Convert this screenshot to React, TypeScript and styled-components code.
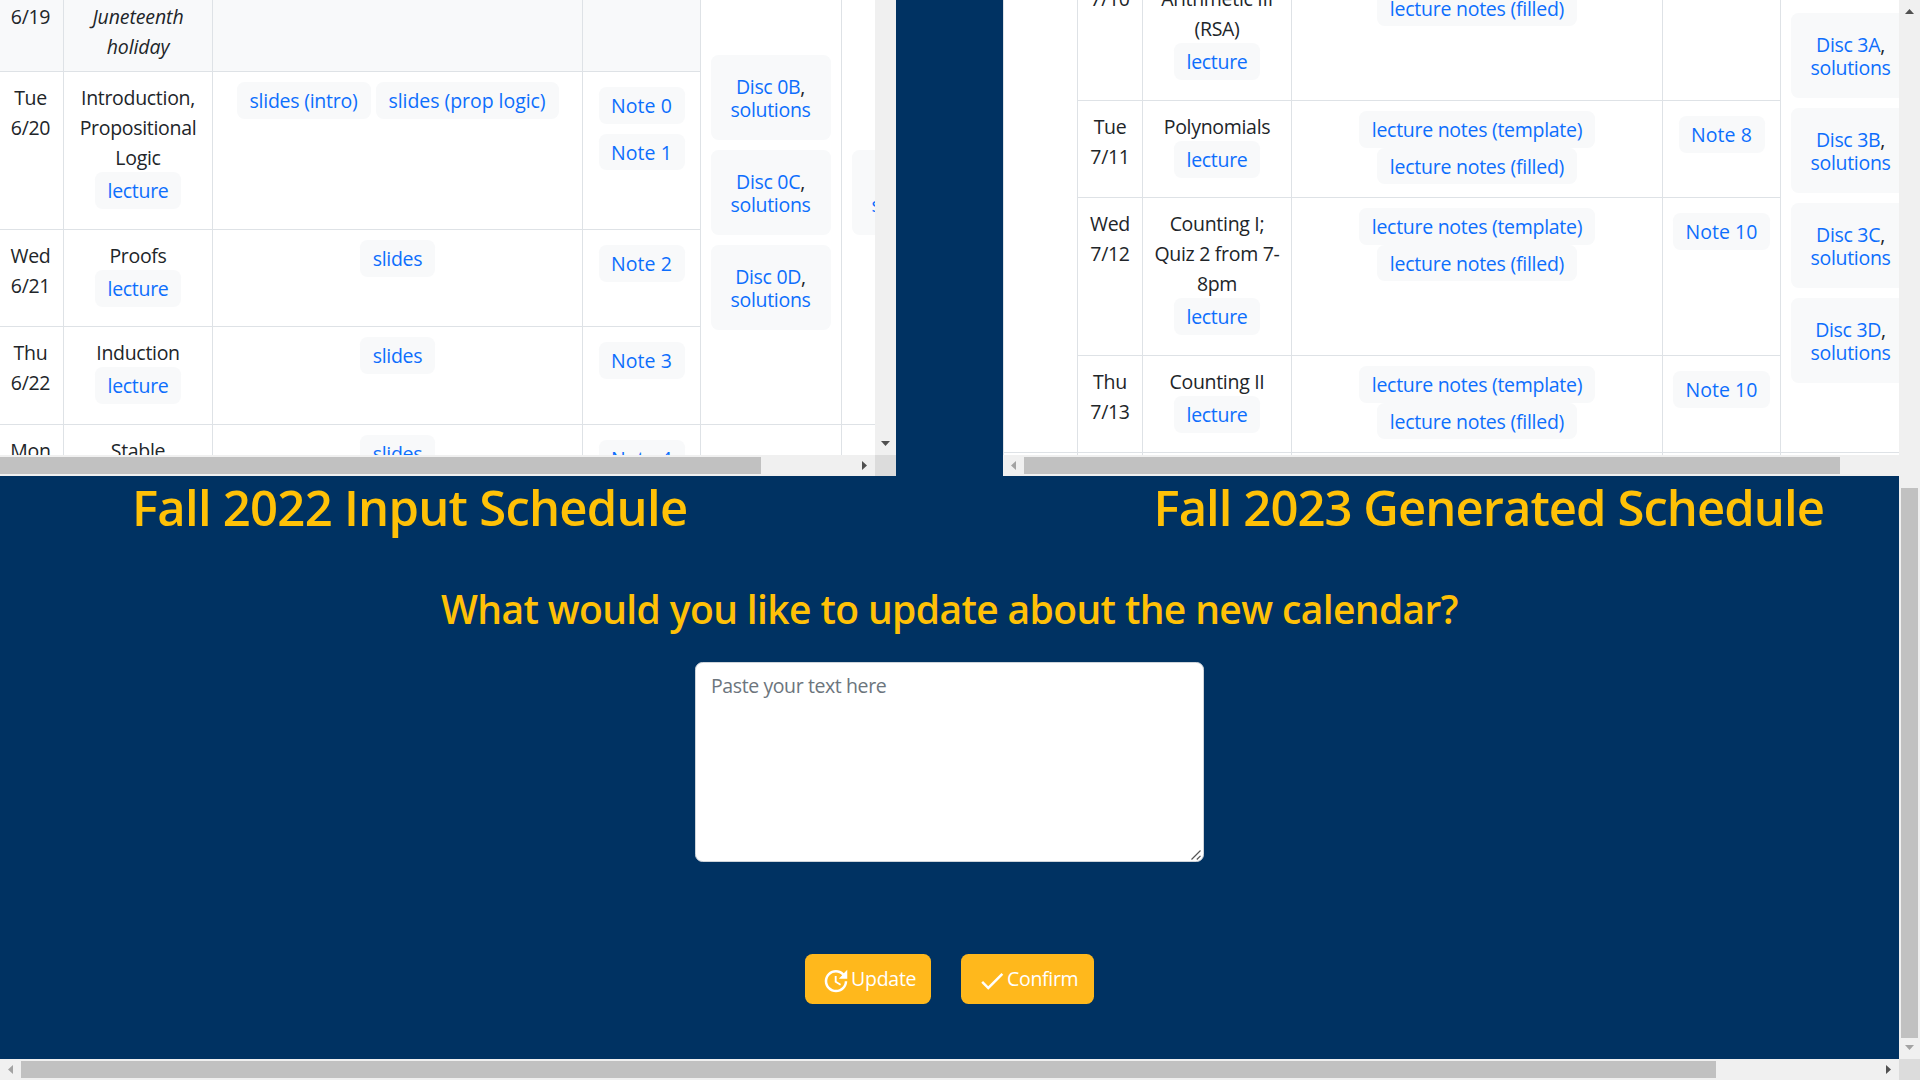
import React from 'react';
import styled, { createGlobalStyle, css } from 'styled-components';

const ink = '#212529';
const link = '#0d6efd';
const line = '#dee2e6';
const chip = '#f8f9fa';
const navy = '#003262';
const gold = '#ffc107';

const GlobalStyle = createGlobalStyle`
  * { box-sizing: border-box; }
  body {
    margin: 0;
    overflow: hidden;
    background: ${navy};
    color: ${ink};
    font-family: "Open Sans", "Noto Sans", sans-serif;
    font-size: 19.5px;
    line-height: 30px;
    letter-spacing: -0.3px;
  }
`;

/* ---------- page frame ---------- */

const Frame = styled.div`
  display: grid;
  grid-template-columns: 1899px 21px;
  grid-template-rows: 1059px 21px;
  width: 1920px;
  height: 1080px;
`;

const Page = styled.main`
  display: flex;
  flex-direction: column;
  overflow: hidden;
  background: ${navy};
`;

const Panes = styled.div`
  display: flex;
  justify-content: space-between;
  height: 476px;
`;

const Pane = styled.section<{ $bar?: boolean }>`
  display: grid;
  grid-template-columns: ${p => (p.$bar ? '875px 21px' : '896px')};
  grid-template-rows: 455px 21px;
  width: 896px;
`;

const Viewport = styled.div`
  overflow: hidden;
  background: #fff;
`;

/* ---------- scrollbars ---------- */

const Bar = styled.div<{ $vertical?: boolean }>`
  display: flex;
  flex-direction: ${p => (p.$vertical ? 'column' : 'row')};
  overflow: hidden;
  background: #f0f0f0;
`;

const Thumb = styled.div<{ $before: number; $length: number; $vertical?: boolean }>`
  flex: none;
  background: #c1c1c1;
  ${p =>
    p.$vertical
      ? css`
          width: 17px;
          height: ${p.$length}px;
          margin: ${p.$before}px 2px 0;
        `
      : css`
          width: ${p.$length}px;
          height: 17px;
          margin: 2px 0 0 ${p.$before}px;
        `}
`;

const Corner = styled.div`
  background: #dcdcdc;
`;

const ArrowBox = styled.div<{ $end?: boolean; $vertical?: boolean; $dim?: boolean }>`
  display: flex;
  flex: none;
  width: 21px;
  height: 21px;
  ${p => p.$end && (p.$vertical ? 'margin-top: auto;' : 'margin-left: auto;')}
  color: ${p => (p.$dim ? '#a3a3a3' : '#505050')};
`;

const arrowPoints = {
  up: '6,14 15,14 10.5,9',
  down: '6,7 15,7 10.5,12',
  left: '13,6 13,15 8,10.5',
  right: '8,6 8,15 13,10.5',
};

function Arrow({ dir, dim, end }: { dir: keyof typeof arrowPoints; dim?: boolean; end?: boolean }) {
  return (
    <ArrowBox $end={end} $dim={dim} $vertical={dir === 'up' || dir === 'down'}>
      <svg width="21" height="21" viewBox="0 0 21 21">
        <polygon points={arrowPoints[dir]} fill="currentColor" />
      </svg>
    </ArrowBox>
  );
}

/* ---------- schedule table ---------- */

const Schedule = styled.div<{ $columns: string; $rows: string; $scroll: number }>`
  display: grid;
  grid-template-columns: ${p => p.$columns};
  grid-template-rows: ${p => p.$rows};
  margin-top: -${p => p.$scroll}px;
`;

const cell = css`
  border-right: 1px solid ${line};
  border-bottom: 1px solid ${line};
`;

const WeekCell = styled.div<{ $row: string }>`
  ${cell}
  grid-row: ${p => p.$row};
  grid-column: 1;
  border-left: 1px solid ${line};
`;

const DateCell = styled.div<{ $col: number; $row: number; $muted?: boolean }>`
  ${cell}
  grid-column: ${p => p.$col};
  grid-row: ${p => p.$row};
  padding: 11px ${p => (p.$col === 1 ? 2 : 0)}px 0 0;
  background: ${p => (p.$muted ? chip : '#fff')};
  text-align: center;
  white-space: pre-line;
`;

const TopicCell = styled(DateCell)`
  display: flex;
  flex-direction: column;
  align-items: center;
  padding: 10px 0 0;
  ${p => p.$muted && 'font-style: italic;'}
`;

const LinksCell = styled(DateCell)`
  display: flex;
  flex-wrap: wrap;
  align-content: flex-start;
  justify-content: center;
  gap: 0 5px;
  padding: 10px 0 0;
`;

const NotesCell = styled(DateCell)`
  display: flex;
  flex-direction: column;
  align-items: center;
  gap: 10px;
  padding: 15px 0 0;
`;

const DiscCell = styled.div<{ $col: number; $row: string; $top: number; $open?: boolean }>`
  ${cell}
  grid-column: ${p => p.$col};
  grid-row: ${p => p.$row};
  display: flex;
  flex-direction: column;
  gap: 10px;
  padding: ${p => p.$top}px 10px 0;
  ${p => p.$open && 'border-right: 0;'}
`;

const Pill = styled.a<{ $w: number; $ls?: number }>`
  flex: none;
  width: ${p => p.$w}px;
  height: 36.5px;
  border-radius: 7.5px;
  background: ${chip};
  color: ${link};
  line-height: 38px;
  letter-spacing: ${p => p.$ls ?? -0.3}px;
  text-align: center;
  white-space: nowrap;
`;

const DiscBox = styled.div`
  flex: none;
  width: 120px;
  height: 85px;
  padding: 21px 1px 0 0;
  border-radius: 7.5px;
  background: ${chip};
  line-height: 22.5px;
  text-align: center;
`;

const DiscLink = styled.a`
  color: ${link};
`;

type LinkItem = [label: string, width: number, spacing?: number];
type Lesson = { date: string; topic: string; lecture?: boolean; links: LinkItem[]; notes: LinkItem[]; muted?: boolean };

const slides: LinkItem[] = [['slides', 75]];
const lectureNotes: LinkItem[] = [
  ['lecture notes (template)', 236, -0.28],
  ['lecture notes (filled)', 200, -0.25],
];
const note = (n: number): LinkItem => ['Note ' + n, n > 9 ? 97 : 86, 0.05];

const summer: Lesson[] = [
  { date: 'Mon\n6/19', topic: 'No lecture:\nJuneteenth\nholiday', links: [], notes: [], muted: true },
  {
    date: 'Tue\n6/20',
    topic: 'Introduction,\nPropositional\nLogic',
    lecture: true,
    links: [['slides (intro)', 134, -0.25], ['slides (prop logic)', 183, -0.05]],
    notes: [note(0), note(1)],
  },
  { date: 'Wed\n6/21', topic: 'Proofs', lecture: true, links: slides, notes: [note(2)] },
  { date: 'Thu\n6/22', topic: 'Induction', lecture: true, links: slides, notes: [note(3)] },
  { date: 'Mon\n6/26', topic: 'Stable\nMatching', lecture: true, links: slides, notes: [note(4)] },
];

const generated: Lesson[] = [
  { date: 'Mon\n7/10', topic: 'Modular\nArithmetic III\n(RSA)', lecture: true, links: lectureNotes, notes: [] },
  { date: 'Tue\n7/11', topic: 'Polynomials', lecture: true, links: lectureNotes, notes: [note(8)] },
  { date: 'Wed\n7/12', topic: 'Counting I;\nQuiz 2 from 7-\n8pm', lecture: true, links: lectureNotes, notes: [note(10)] },
  { date: 'Thu\n7/13', topic: 'Counting II', lecture: true, links: lectureNotes, notes: [note(10)] },
  { date: '', topic: '', links: [], notes: [] },
];

const Topic = styled.div<{ $muted?: boolean }>`
  padding-top: 1px;
  margin-bottom: -1px;
  white-space: pre;
  ${p => p.$muted && 'letter-spacing: -0.1px;'}
`;

function Pills({ items }: { items: LinkItem[] }) {
  return (
    <>
      {items.map(([label, width, spacing]) => (
        <Pill key={label} $w={width} $ls={spacing}>
          {label}
        </Pill>
      ))}
    </>
  );
}

function Lessons({ lessons, first }: { lessons: Lesson[]; first: number }) {
  return (
    <>
      {lessons.map((l, i) => (
        <React.Fragment key={i}>
          <DateCell $col={first} $row={i + 1} $muted={l.muted}>
            {l.date}
          </DateCell>
          <TopicCell $col={first + 1} $row={i + 1} $muted={l.muted}>
            <Topic $muted={l.muted}>{l.topic}</Topic>
            {l.lecture && <Pill $w={86}>lecture</Pill>}
          </TopicCell>
          <LinksCell $col={first + 2} $row={i + 1} $muted={l.muted}>
            <Pills items={l.links} />
          </LinksCell>
          <NotesCell $col={first + 3} $row={i + 1} $muted={l.muted}>
            <Pills items={l.notes} />
          </NotesCell>
        </React.Fragment>
      ))}
    </>
  );
}

function Disc({ id }: { id: string }) {
  return (
    <DiscBox>
      <DiscLink>Disc {id}</DiscLink>,<br />
      <DiscLink>solutions</DiscLink>
    </DiscBox>
  );
}

/* ---------- lower form ---------- */

const Titles = styled.div`
  display: flex;
  justify-content: space-between;
  padding: 1px 75px 0 132px;
`;

const Title = styled.h1<{ $ls: number }>`
  margin: 0;
  color: ${gold};
  font-size: 49px;
  font-weight: 600;
  line-height: 60px;
  letter-spacing: ${p => p.$ls}px;
  white-space: nowrap;
`;

const Form = styled.form`
  display: flex;
  flex-direction: column;
  align-items: center;
`;

const Question = styled.h2`
  margin: 48px 0 29px;
  color: ${gold};
  font-size: 39px;
  font-weight: 600;
  line-height: 48px;
  letter-spacing: -0.62px;
  white-space: nowrap;
`;

const InputWrap = styled.div`
  position: relative;
`;

const Grip = styled.svg`
  position: absolute;
  right: 3px;
  bottom: 2px;
  width: 10px;
  height: 10px;
  stroke: #555;
  stroke-width: 1.2;
`;

const Input = styled.textarea`
  display: block;
  width: 509px;
  height: 200px;
  padding: 7.5px 15px;
  border: 1px solid #ced4da;
  border-radius: 7.5px;
  outline: 0;
  background: #fff;
  color: ${ink};
  font: inherit;
  letter-spacing: -0.4px;
  resize: none;
  &::placeholder {
    color: #6c757d;
    opacity: 1;
  }
`;

const Actions = styled.div`
  display: flex;
  gap: 30px;
  margin-top: 92px;
`;

const Button = styled.button<{ $w: number; $ls: number }>`
  display: flex;
  align-items: center;
  width: ${p => p.$w}px;
  height: 50px;
  padding: 0 0 0 16px;
  border: 0;
  border-radius: 7.5px;
  background: #ffb81c;
  color: #fff;
  font: inherit;
  font-weight: 500;
  letter-spacing: ${p => p.$ls}px;
  white-space: nowrap;
`;

const Icon = styled.svg`
  flex: none;
  width: 30px;
  height: 30px;
  margin-top: 4px;
  fill: currentColor;
`;

export default function App() {
  return (
    <Frame>
      <GlobalStyle />
      <Page>
        <Panes>
          <Pane $bar>
            <Viewport>
              <Schedule $columns="64px 149px 370px 118px 141px 141px" $rows="111px 158px 97px 98px 158px" $scroll={39}>
                <Lessons lessons={summer} first={1} />
                <DiscCell $col={5} $row="1 / span 4" $top={94}>
                  <Disc id="0B" />
                  <Disc id="0C" />
                  <Disc id="0D" />
                </DiscCell>
                <DiscCell $col={6} $row="1 / span 4" $top={189}>
                  <Disc id="0C" />
                </DiscCell>
                <DiscCell $col={5} $row="5" $top={94} />
              </Schedule>
            </Viewport>
            <Bar $vertical>
              <Arrow dir="down" end />
            </Bar>
            <Bar>
              <Thumb $before={0} $length={761} />
              <Arrow dir="right" end />
            </Bar>
            <Corner />
          </Pane>
          <Pane>
            <Viewport>
              <Schedule $columns="75px 65px 149px 371px 118px 141px" $rows="158px 97px 158px 97px 97px" $scroll={57}>
                <WeekCell $row="1 / span 4" />
                <WeekCell $row="5" />
                <Lessons lessons={generated} first={2} />
                <DiscCell $col={6} $row="1 / span 4" $top={70} $open>
                  <Disc id="3A" />
                  <Disc id="3B" />
                  <Disc id="3C" />
                  <Disc id="3D" />
                </DiscCell>
              </Schedule>
            </Viewport>
            <Bar>
              <Arrow dir="left" dim />
              <Thumb $before={0} $length={816} />
            </Bar>
          </Pane>
        </Panes>
        <Titles>
          <Title $ls={-0.75}>Fall 2022 Input Schedule</Title>
          <Title $ls={-0.95}>Fall 2023 Generated Schedule</Title>
        </Titles>
        <Form>
          <Question>What would you like to update about the new calendar?</Question>
          <InputWrap>
            <Input placeholder="Paste your text here" />
            <Grip viewBox="0 0 10 10">
              <path d="M0.5 9.5 9.5 0.5M5.8 9.5 9.5 5.8" />
            </Grip>
          </InputWrap>
          <Actions>
            <Button type="button" $w={126} $ls={-0.25}>
              <Icon viewBox="0 0 24 24">
                <path d="M21 10.12h-6.78l2.74-2.82c-2.73-2.7-7.15-2.8-9.88-.1-2.73 2.71-2.73 7.08 0 9.79s7.15 2.71 9.88 0C18.32 15.65 19 14.08 19 12.1h2c0 1.98-.88 4.55-2.64 6.29-3.51 3.48-9.21 3.48-12.72 0-3.5-3.47-3.53-9.11-.02-12.58s9.14-3.47 12.65 0L21 3v7.12zM12.5 8v4.25l3.5 2.08-.72 1.21L11 13V8h1.5z" />
              </Icon>
              Update
            </Button>
            <Button type="button" $w={133} $ls={-0.3}>
              <Icon viewBox="0 0 24 24">
                <path d="M9 16.17 4.83 12l-1.42 1.41L9 19 21 7l-1.41-1.41z" />
              </Icon>
              Confirm
            </Button>
          </Actions>
        </Form>
      </Page>
      <Bar $vertical>
        <Arrow dir="up" />
        <Thumb $vertical $before={467} $length={550} />
        <Arrow dir="down" dim end />
      </Bar>
      <Bar>
        <Arrow dir="left" dim />
        <Thumb $before={0} $length={1695} />
        <Arrow dir="right" end />
      </Bar>
      <Corner />
    </Frame>
  );
}
